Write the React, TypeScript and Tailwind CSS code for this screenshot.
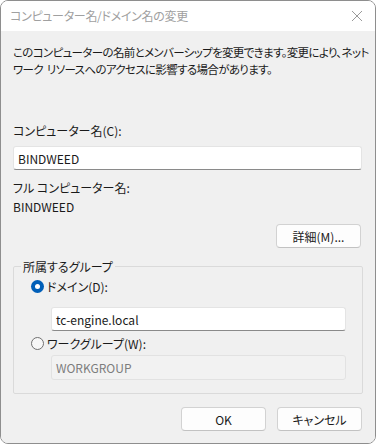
import React from 'react';

const font = "font-['Noto_Sans_CJK_JP',sans-serif] [font-feature-settings:'palt']";

function Radio({ checked }: { checked?: boolean }) {
    if (checked) {
        return (
            <span className="flex h-[13px] w-[13px] shrink-0 items-center justify-center rounded-full bg-[#005fb8]">
                <span className="h-[5px] w-[5px] rounded-full bg-white" />
            </span>
        );
    }
    return <span className="h-[13px] w-[13px] shrink-0 rounded-full border border-[#707070] bg-[#f7f7f7]" />;
}

function Btn({ children, className = '' }: { children: React.ReactNode; className?: string }) {
    return (
        <button
            type="button"
            className={`flex h-[24px] w-[85px] items-center justify-center rounded-[4px] border border-[#d2d2d2] border-b-[#c2c2c2] bg-[#fdfdfd] text-[12px] text-[#1a1a1a] ${className}`}
        >
            {children}
        </button>
    );
}

export default function App() {
    return (
        <div className={`h-[446px] w-[376px] bg-white ${font}`}>
            <div className="flex h-[444px] w-[376px] flex-col overflow-hidden rounded-[8px] border border-[#8e8e8e]">
                {/* title bar */}
                <div className="flex h-[30px] shrink-0 items-center justify-between bg-white pl-[9px] pr-[9px]">
                    <span className="text-[12px] leading-none tracking-[-0.3px] text-[#a0a0a0]">コンピューター名/ドメイン名の変更</span>
                    <svg width="12" height="12" viewBox="0 0 12 12" className="mr-[3px]">
                        <path d="M1 1 L11 11 M11 1 L1 11" stroke="#9a9a9a" strokeWidth="1" fill="none" />
                    </svg>
                </div>

                <div className="flex flex-1 flex-col bg-[#f0f0f0] pl-[12px] pr-[13px] text-[12px] leading-[17px] text-[#1a1a1a]">
                    <p className="mt-[13px] whitespace-nowrap text-[11.5px] tracking-[-0.65px]">
                        このコンピューターの名前とメンバーシップを変更できます。変更により、ネット
                        <br />
                        ワーク<span className="inline-block w-[4px]"> </span>リソースへのアクセスに影響する場合があります。
                    </p>

                    <label className="mt-[44px]">コンピューター名(C):</label>
                    <div className="mt-[7px] flex h-[24px] w-[349px] items-center rounded-[3px] border border-[#e4e4e4] border-b-[#8a8a8a] bg-white px-[4px]">
                        BINDWEED
                    </div>

                    <div className="mt-[9px]">フル コンピューター名:</div>
                    <div className="mt-[2px]">BINDWEED</div>

                    <div className="mt-[9px] flex justify-end pr-[1px]">
                        <Btn>詳細(M)...</Btn>
                    </div>

                    <fieldset className="mt-[10px] w-[350px] rounded-[2px] border border-[#dadada] pb-[13px] pl-[17px] pr-[16px]">
                        <legend className="-ml-[10px] px-[2px]">所属するグループ</legend>
                        <div className="mt-[3px] flex h-[17px] items-center gap-[3px]">
                            <Radio checked />
                            <span>ドメイン(D):</span>
                        </div>
                        <div className="ml-[20px] mt-[12px] flex h-[24px] items-center rounded-[3px] border border-[#e4e4e4] border-b-[#8a8a8a] bg-white px-[4px]">
                            tc-engine.local
                        </div>
                        <div className="mt-[4px] flex h-[17px] items-center gap-[3px]">
                            <Radio />
                            <span>ワークグループ(W):</span>
                        </div>
                        <div className="ml-[20px] mt-[3px] flex h-[25px] items-center rounded-[3px] border border-[#e2e2e2] bg-[#f2f2f2] px-[4px] text-[#7d7d7d]">
                            WORKGROUP
                        </div>
                    </fieldset>

                    <div className="mt-[13px] flex justify-end gap-[11px]">
                        <Btn>OK</Btn>
                        <Btn>キャンセル</Btn>
                    </div>
                </div>
            </div>
        </div>
    );
}
